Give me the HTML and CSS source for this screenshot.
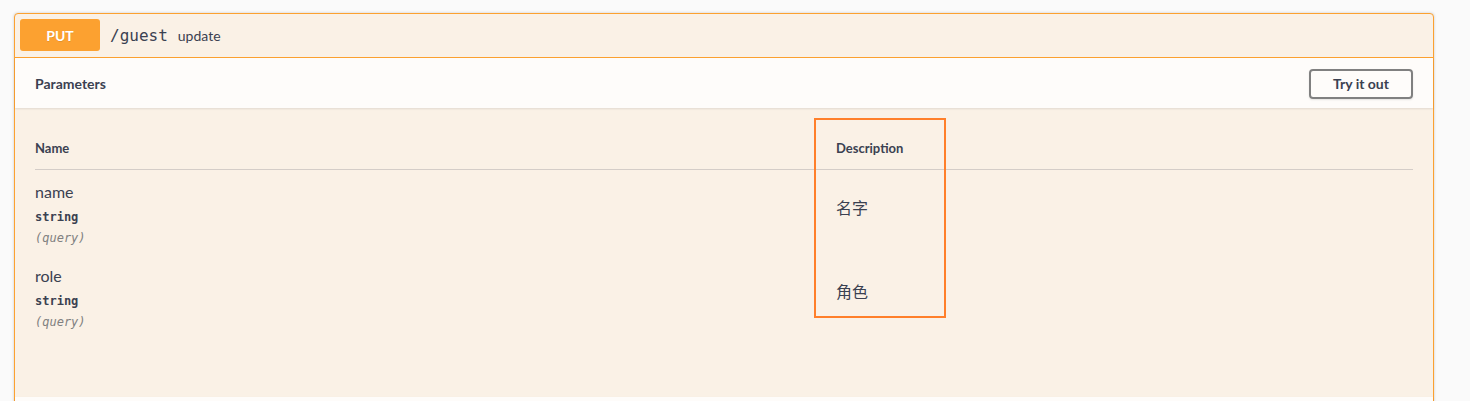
FILE: index.html
```html
<!DOCTYPE html>
<html lang="zh">
<head>
<meta charset="utf-8">
<title>PUT /guest</title>
<link rel="stylesheet" href="styles.css">
</head>
<body>
<div class="page">
  <div class="opblock">
    <div class="summary">
      <span class="method">PUT</span>
      <span class="path">/guest</span>
      <span class="summary-desc">update</span>
    </div>
    <div class="section-header">
      <h4 class="title">Parameters</h4>
      <button class="try-out">Try it out</button>
    </div>
    <div class="table-container">
      <div class="params">
        <div class="row head">
          <div class="th">Name</div>
          <div class="th">Description</div>
        </div>
        <div class="row">
          <div class="col-name">
            <div class="p-name">name</div>
            <div class="p-type">string</div>
            <div class="p-in">(query)</div>
          </div>
          <div class="col-desc">名字</div>
        </div>
        <div class="row">
          <div class="col-name">
            <div class="p-name">role</div>
            <div class="p-type">string</div>
            <div class="p-in">(query)</div>
          </div>
          <div class="col-desc">角色</div>
        </div>
      </div>
    </div>
    <div class="section-header next"></div>
  </div>
</div>
<div class="highlight"></div>
</body>
</html>
```

FILE: styles.css
```css
html, body {
  margin: 0;
  padding: 0;
}
body {
  background: #fafafa;
  font-family: Lato, "Noto Sans CJK SC", sans-serif;
  color: #3b4151;
  height: 401px;
  overflow: hidden;
}
.page {
  padding: 13px 36px 0 14px;
}
.opblock {
  border: 1px solid #fca130;
  border-radius: 4px;
  background: #faf1e6;
  box-shadow: 0 0 3px rgba(0, 0, 0, 0.19);
}
.summary {
  display: flex;
  align-items: center;
  padding: 5px 5px 6px 5px;
  border-bottom: 1px solid #fca130;
}
.method {
  display: flex;
  align-items: center;
  justify-content: center;
  width: 80px;
  height: 32px;
  box-sizing: border-box;
  background: #fca130;
  border-radius: 3px;
  color: #fff;
  font-size: 14px;
  font-weight: 700;
  text-shadow: 0 1px 0 rgba(0, 0, 0, 0.1);
}
.path {
  padding: 0 10px;
  font-family: "DejaVu Sans Mono", monospace;
  font-size: 16px;
  color: #3b4151;
}
.summary-desc {
  font-size: 14px;
  color: #3b4151;
}
.section-header {
  display: flex;
  align-items: center;
  justify-content: space-between;
  height: 50px;
  box-sizing: border-box;
  padding: 0 20px;
  background: rgba(255, 255, 255, 0.8);
  box-shadow: 0 1px 2px rgba(0, 0, 0, 0.1);
}
.title {
  margin: 0;
  font-size: 14px;
  font-weight: 700;
  color: #3b4151;
  padding-top: 1px;
}
.try-out {
  font-family: Lato, sans-serif;
  font-size: 14px;
  font-weight: 700;
  color: #3b4151;
  line-height: 16px;
  width: 104px;
  height: 30px;
  padding: 0;
  background: transparent;
  border: 2px solid #808080;
  border-radius: 4px;
  box-shadow: 0 1px 2px rgba(0, 0, 0, 0.1);
  margin-top: 1px;
}
.table-container {
  padding: 20px 20px 59px 20px;
}
.row {
  display: grid;
  grid-template-columns: 801px 1fr;
  height: 84px;
}
.row.head {
  height: 42px;
  box-sizing: border-box;
  border-bottom: 1px solid rgba(59, 65, 81, 0.2);
}
.th {
  padding-top: 12px;
  font-size: 13px;
  font-weight: 700;
  line-height: 17px;
}
.col-name {
  padding-top: 11px;
}
.p-name {
  font-size: 16px;
  line-height: 22px;
}
.p-type {
  font-family: "DejaVu Sans Mono", monospace;
  font-size: 12px;
  font-weight: 700;
  line-height: 14px;
  padding: 7px 0 5px;
}
.p-in {
  font-family: "DejaVu Sans Mono", monospace;
  font-size: 12px;
  font-style: italic;
  color: #808080;
  line-height: 18px;
}
.col-desc {
  padding-top: 26px;
  font-family: "Noto Sans CJK SC", sans-serif;
  font-size: 16px;
  line-height: 22px;
}
.section-header.next {
  height: 50px;
}
.highlight {
  position: absolute;
  left: 814px;
  top: 118px;
  width: 132px;
  height: 200px;
  box-sizing: border-box;
  border: 2px solid #ff7f2a;
}
```
